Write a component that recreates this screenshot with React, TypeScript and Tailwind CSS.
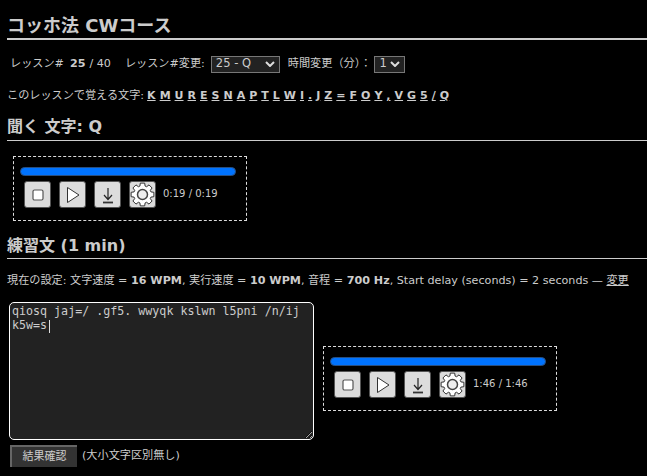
const letters = ['K', 'M', 'U', 'R', 'E', 'S', 'N', 'A', 'P', 'T', 'L', 'W', 'I', '.', 'J', 'Z', '=', 'F', 'O', 'Y', ',', 'V', 'G', '5', '/', 'Q']

const Btn = ({ children }: { children: React.ReactNode }) => (
  <div className="w-[27px] h-[27px] rounded-[3px] bg-[#dcdcdc] border border-[#555] flex items-center justify-center">
    {children}
  </div>
)

// eight teeth, each a small trapezoid around the hub
const gearPath = () => {
  const pts: string[] = []
  for (let i = 0; i < 8; i++) {
    const a = (i * Math.PI) / 4
    const p = (r: number, d: number) => {
      const t = a + d
      return `${(12.5 + r * Math.sin(t)).toFixed(2)} ${(12.5 - r * Math.cos(t)).toFixed(2)}`
    }
    pts.push(p(8.8, -0.3), p(11.6, -0.19), p(11.6, 0.19), p(8.8, 0.3))
  }
  return `M${pts.join(' L')} Z`
}

const Gear = () => (
  <svg width="25" height="25" viewBox="0 0 25 25">
    <path d={gearPath()} fill="#fff" stroke="#333" strokeWidth="1" strokeLinejoin="round" />
    <circle cx="12.5" cy="12.5" r="5" fill="#eee" stroke="#444" strokeWidth="1.5" />
  </svg>
)

const Chevron = () => (
  <svg width="10" height="6" viewBox="0 0 10 6"><path d="M1 1 L5 5 L9 1" fill="none" stroke="#ddd" strokeWidth="2" /></svg>
)

const Player = ({ time, className }: { time: string; className?: string }) => (
  <div className={`w-[234px] h-[65px] border border-dashed border-[#ddd] pt-[10px] pl-[6px] ${className ?? ''}`}>
    <div className="w-[216px] h-[9px] rounded-[5px] bg-[#0073ff] border border-[#2a4f80]" />
    <div className="flex items-center gap-[8px] mt-[5px] ml-[4px]">
      <Btn>
        <svg width="14" height="14" viewBox="0 0 14 14">
          <rect x="2" y="2" width="10" height="10" rx="1.5" fill="#fff" stroke="#555" strokeWidth="1.2" />
        </svg>
      </Btn>
      <Btn>
        <svg width="16" height="20" viewBox="0 0 16 20">
          <path d="M2.5 2.5 L14 10 L2.5 17.5 Z" fill="#fff" stroke="#333" strokeWidth="1" />
        </svg>
      </Btn>
      <Btn>
        <svg width="14" height="18" viewBox="0 0 14 18">
          <path d="M7 2 V13.5 M3 9 L7 13.5 L11 9" fill="none" stroke="#222" strokeWidth="1.2" />
          <path d="M2 16.5 H12" stroke="#333" strokeWidth="1.8" />
        </svg>
      </Btn>
      <Btn>
        <Gear />
      </Btn>
      <span className="text-[10px] text-[#ccc] -ml-[1px] -mt-[2px]">{time}</span>
    </div>
  </div>
)

export default function App() {
  return (
    <div className="w-[647px] h-[476px] overflow-hidden bg-black text-[#ccc] text-[11.15px] font-['DejaVu_Sans','Noto_Sans_CJK_JP',sans-serif] px-[7px]">
      <h1 className="h-[40px] pt-[14px] text-[18px] leading-[23px] font-bold border-b-2 border-[#ccc] w-[640px]">コッホ法 CWコース</h1>

      <div className="flex items-center h-[18px] mt-[15px] pl-[3px]">
        <span>レッスン#</span>
        <b className="ml-[6px]">25</b>
        <span className="ml-[4px]">/ 40</span>
        <span className="ml-[14px]">レッスン#変更:</span>
        <div className="ml-[6px] w-[69px] h-[17px] bg-[#222] border border-[#777] flex items-center justify-between px-[4px]">
          <span className="text-[11.5px]">25 - Q</span>
          <Chevron />
        </div>
        <span className="ml-[8px]">時間変更（分）：</span>
        <div className="ml-[3px] w-[31px] h-[17px] bg-[#222] border border-[#777] flex items-center justify-between px-[4px]">
          <span className="text-[11.5px]">1</span>
          <Chevron />
        </div>
      </div>

      <div className="flex items-center h-[16px] mt-[15px]">
        <span>このレッスンで覚える文字:</span>
        <span className="flex ml-[3px] gap-[4px] font-bold text-[11px]">
          {letters.map((l, i) => (
            <a key={i} className="underline">{l}</a>
          ))}
        </span>
      </div>

      <h2 className="mt-[10px] h-[27px] text-[16px] leading-[20px] pt-[3px] font-bold border-b border-[#ccc] w-[640px]">聞く 文字: Q</h2>

      <Player time="0:19 / 0:19" className="mt-[15px] ml-[6px]" />

      <h2 className="mt-[15px] h-[23px] text-[16px] leading-[20px] font-bold border-b border-[#ccc] w-[640px]">練習文 (1 min)</h2>

      <p className="mt-[14px] h-[16px] leading-[16px] whitespace-nowrap">
        現在の設定: 文字速度 = <b>16 WPM</b>, 実行速度 = <b>10 WPM</b>, 音程 = <b>700 Hz</b>, Start delay (seconds) = 2 seconds — <a className="underline">変更</a>
      </p>

      <div className="flex items-start mt-[13px] ml-[2px]">
        <div className="relative">
          <textarea
            readOnly
            className="w-[305px] h-[138px] bg-[#222] border border-white rounded-[5px] px-[2px] py-[1px] text-[11.67px] leading-[14px] text-[#ccc] font-[family-name:'DejaVu_Sans_Mono',monospace] outline-none block"
            defaultValue={'qiosq jaj=/ .gf5. wwyqk kslwn l5pni /n/ij k5w=s'}
          />
          <div className="absolute left-[40px] top-[18px] w-px h-[13px] bg-[#ddd]" />
        </div>
        <Player time="1:46 / 1:46" className="ml-[9px] mt-[44px]" />
      </div>

      <div className="flex items-center mt-[5px] ml-[3px]">
        <button className="w-[67px] h-[22px] bg-[#333] border-l-2 border-t-2 border-l-[#666] border-t-[#666] text-[#ccc] text-[11px]">結果確認</button>
        <span className="ml-[5px]">(大小文字区別無し)</span>
      </div>
    </div>
  )
}
